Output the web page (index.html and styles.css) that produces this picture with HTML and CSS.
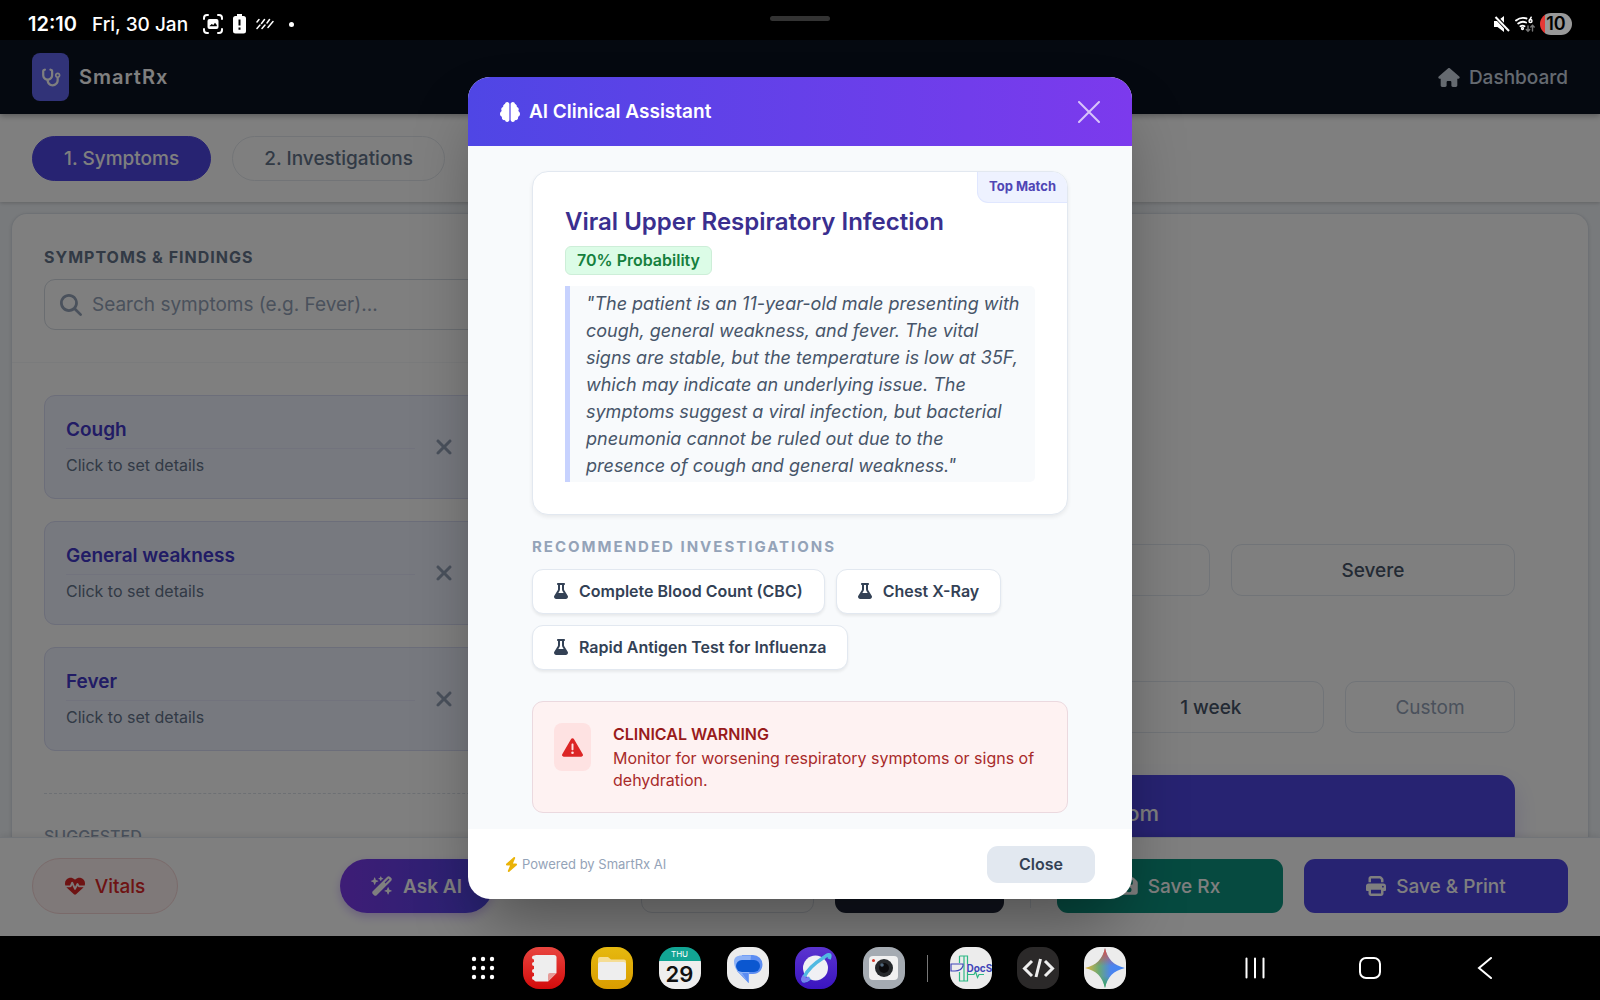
FILE: index.html
```html
<!DOCTYPE html>
<html lang="en">
<head>
<meta charset="utf-8">
<meta name="viewport" content="width=device-width, initial-scale=1">
<title>SmartRx</title>
<link rel="stylesheet" href="styles.css">
</head>
<body>
<svg class="sprite" aria-hidden="true">
  <symbol id="i-flask" viewBox="0 0 448 512"><path d="M288 0H160 128C110.300 0 96 14.300 96 32s14.300 32 32 32V196.800c0 11.800-3.300 23.500-9.500 33.500L10.300 406.200C3.600 417.200 0 429.700 0 442.600C0 480.900 31.100 512 69.400 512H378.600c38.300 0 69.400-31.100 69.400-69.400c0-12.800-3.600-25.400-10.300-36.400L329.500 230.400c-6.200-10.100-9.500-21.700-9.500-33.500V64c17.700 0 32-14.300 32-32s-14.300-32-32-32H288zM192 196.800V64h64V196.800c0 23.700 6.600 46.900 19 67.100L309.500 320h-171L173 263.900c12.400-20.200 19-43.400 19-67.100z"/></symbol>
  <symbol id="i-x" viewBox="0 0 384 512"><path d="M342.600 150.600c12.500-12.500 12.500-32.800 0-45.300s-32.800-12.500-45.300 0L192 210.700 86.600 105.400c-12.500-12.500-32.800-12.500-45.300 0s-12.500 32.800 0 45.300L146.700 256 41.400 361.400c-12.500 12.500-12.500 32.800 0 45.300s32.800 12.500 45.300 0L192 301.300 297.400 406.600c12.500 12.500 32.800 12.500 45.300 0s12.500-32.800 0-45.300L237.300 256 342.600 150.600z"/></symbol>
</svg>

<div class="statusbar">
  <div class="status-left">
    <span>12:10</span>
    <span class="date">Fri, 30 Jan</span>
    <svg class="st-icon" width="20" height="20" viewBox="0 0 20 20" fill="none" stroke="#fff" stroke-width="2" stroke-linecap="round"><path d="M1 5V4a3 3 0 0 1 3-3h1M15 1h1a3 3 0 0 1 3 3v1M19 15v1a3 3 0 0 1-3 3h-1M5 19H4a3 3 0 0 1-3-3v-1"/><rect x="4.500" y="5" width="11" height="10" rx="2" fill="#fff" stroke="none"/><path d="M6.500 12l2.200-2 1.600 1 1.700-2.200 1.800 2.200v1.200H6.500z" fill="#000" stroke="none"/></svg>
    <svg width="13" height="20" viewBox="0 0 13 20"><path d="M4 0h5v2h1.500A2.500 2.500 0 0 1 13 4.500v12.500a2.500 2.500 0 0 1-2.500 2.500h-8A2.500 2.500 0 0 1 0 17V4.500A2.500 2.500 0 0 1 2.500 2H4z" fill="#fff"/><path d="M5.500 5.500h2v6h-2zM5.500 13.500h2v2.200h-2z" fill="#000"/></svg>
    <svg width="18" height="12" viewBox="0 0 18 12" fill="none" stroke="#fff" stroke-width="1.500" stroke-linecap="round"><path d="M1 4L3 1.500M1 10.500L4 7M5.500 5.500L8.500 1.500M6 10.500L9 7M11 5L13.500 1.500M12 9.500L17 3.500"/></svg>
    <span class="dot"></span>
  </div>
  <span class="handle"></span>
  <div class="status-right">
    <svg width="16" height="16" viewBox="0 0 16 16"><path d="M0 5h3.500L10 0v16L3.500 11H0z" fill="#fff"/><path d="M1 0l14 15" stroke="#000" stroke-width="4"/><path d="M1.500 1l13.500 14" stroke="#fff" stroke-width="2"/></svg>
    <svg width="20" height="17" viewBox="0 0 20 17" fill="none" stroke="#fff" stroke-width="1.900" stroke-linecap="round"><path d="M1 4.500Q6 .5 11.500 2.500M3.200 7.500Q7 4.700 11 6.500M5.500 10.300q2-1.400 4 0"/><circle cx="7.500" cy="12.500" r=".7"/><path d="M16.200 1.200l-1.500 3" stroke-width="1.500"/><circle cx="15.500" cy="5" r="1.500" stroke-width="1.400"/><g stroke="#777" stroke-width="1.400"><path d="M13 10v5M11.300 13.400L13 15.200l1.700-1.800M17.500 15V9.500M15.800 11l1.700-1.800L19.200 11"/></g></svg>
    <span class="battery">10</span>
  </div>
</div>

<div class="app">
  <header class="topbar">
    <div class="brand">
      <span class="logo"><svg width="20" height="19" viewBox="0 0 576 512" fill="#fff"><path d="M142.400 21.900c5.600 16.800-3.500 34.900-20.200 40.500L96 71.100V192c0 53 43 96 96 96s96-43 96-96V71.100l-26.100-8.700c-16.800-5.600-25.800-23.700-20.200-40.500s23.700-25.800 40.500-20.200l26.100 8.700C334.400 19.100 352 43.500 352 71.100V192c0 77.200-54.600 141.600-127.300 156.700C231 404.600 278.400 448 336 448c61.900 0 112-50.100 112-112V265.300c-28.300-12.300-48-40.500-48-73.300c0-44.200 35.800-80 80-80s80 35.800 80 80c0 32.800-19.700 61-48 73.300V336c0 97.200-78.800 176-176 176c-92.900 0-168.900-71.900-175.500-163.100C87.200 334.200 32 269.600 32 192V71.100c0-27.500 17.600-52 43.800-60.700l26.100-8.700c16.800-5.600 34.900 3.500 40.500 20.200zM480 224a32 32 0 1 0 0-64 32 32 0 1 0 0 64z"/></svg></span>
      <span class="brand-name">SmartRx</span>
    </div>
    <a class="dash" href="#"><svg width="22" height="19" viewBox="0 0 576 512" fill="currentColor"><path d="M575.800 255.500c0 18-15 32.100-32 32.100h-32l.7 160.200c0 2.700-.2 5.400-.5 8.100V472c0 22.100-17.900 40-40 40H456H416 392c-22.100 0-40-17.900-40-40V448 384c0-17.700-14.300-32-32-32H256c-17.700 0-32 14.300-32 32v64 24c0 22.100-17.900 40-40 40H160 104c-22.100 0-40-17.900-40-40V360V287.600H32c-18 0-32-14-32-32.100c0-9 3-17 10-24L266.400 8c7-7 15-8 22-8s15 2 21 7L564.800 231.500c8 7 12 15 11 24z"/></svg>Dashboard</a>
  </header>

  <nav class="tabs">
    <button class="tab active">1. Symptoms</button>
    <button class="tab">2. Investigations</button>
  </nav>

  <main class="workspace">
    <div class="panel">
      <section class="list-pane">
        <div class="search-block">
          <label class="label" for="search">SYMPTOMS &amp; FINDINGS</label>
          <div class="search">
            <svg width="22" height="22" viewBox="0 0 512 512" fill="#94a3b8"><path d="M416 208c0 45.900-14.900 88.300-40 122.700L502.600 457.400c12.500 12.500 12.500 32.800 0 45.300s-32.800 12.500-45.300 0L330.700 376c-34.400 25.200-76.800 40-122.700 40C93.100 416 0 322.900 0 208S93.100 0 208 0S416 93.100 416 208zM208 352a144 144 0 1 0 0-288 144 144 0 1 0 0 288z"/></svg>
            <input id="search" type="text" placeholder="Search symptoms (e.g. Fever)...">
          </div>
        </div>
        <div class="items">
          <article class="item"><div class="item-text"><h3>Cough</h3><p>Click to set details</p></div><button class="remove" aria-label="Remove Cough"><svg width="18" height="24"><use href="#i-x"/></svg></button></article>
          <article class="item"><div class="item-text"><h3>General weakness</h3><p>Click to set details</p></div><button class="remove" aria-label="Remove General weakness"><svg width="18" height="24"><use href="#i-x"/></svg></button></article>
          <article class="item"><div class="item-text"><h3>Fever</h3><p>Click to set details</p></div><button class="remove" aria-label="Remove Fever"><svg width="18" height="24"><use href="#i-x"/></svg></button></article>
          <div class="suggested">SUGGESTED</div>
        </div>
      </section>
      <section class="detail-pane">
        <div class="options three">
          <button class="option">Mild</button><button class="option">Moderate</button><button class="option">Severe</button>
        </div>
        <div class="options duration">
          <div class="presets"><button class="option">1 day</button><button class="option">3 days</button><button class="option">1 week</button></div>
          <input class="option custom" type="text" placeholder="Custom" aria-label="Custom duration">
        </div>
        <button class="update">Update Symptom</button>
      </section>
    </div>
  </main>

  <footer class="actions">
    <button class="btn vitals"><svg width="20" height="20" viewBox="0 0 512 512" fill="currentColor"><path d="M228.300 469.100L47.600 300.400c-4.200-3.900-8.200-8.100-11.900-12.400h87c22.600 0 43-13.600 51.700-34.500l10.500-25.200 49.300 109.500c3.800 8.500 12.100 14 21.400 14.100s17.800-5 22-13.300L320 253.700l1.700 3.400c9.500 19 28.900 31 50.100 31H476.300c-3.700 4.300-7.700 8.500-11.900 12.400L283.700 469.100c-7.500 7-17.400 10.900-27.700 10.900s-20.200-3.900-27.700-10.900zM503.700 240h-132c-3 0-5.800-1.700-7.200-4.400l-23.200-46.300c-4.100-8.100-12.400-13.300-21.500-13.300s-17.400 5.100-21.500 13.300l-41.400 82.800L205.900 158.200c-3.900-8.700-12.700-14.300-22.200-14.100s-18.100 5.900-21.800 14.800l-31.800 76.300c-1.200 3-4.200 4.900-7.400 4.900H16c-2.600 0-5 .4-7.300 1.100C3 225.200 0 208.200 0 190.900v-5.800c0-69.900 50.500-129.500 119.400-141C165 36.500 211.400 51.400 244 84l12 12 12-12c32.600-32.600 79-47.500 124.600-39.900C461.500 55.600 512 115.200 512 185.100v5.800c0 16.900-2.800 33.500-8.300 49.100z"/></svg>Vitals</button>
    <button class="btn ask"><svg width="22" height="20" viewBox="0 0 576 512" fill="currentColor"><path d="M234.700 42.700L197 56.800c-3 1.100-5 4-5 7.200s2 6.100 5 7.200l37.700 14.100L248.800 123c1.100 3 4 5 7.200 5s6.100-2 7.200-5l14.100-37.700L315 71.200c3-1.100 5-4 5-7.200s-2-6.100-5-7.200L277.300 42.700 263.200 5c-1.100-3-4-5-7.200-5s-6.100 2-7.200 5L234.700 42.700zM46.100 395.400c-18.700 18.700-18.700 49.100 0 67.900l34.600 34.600c18.700 18.700 49.100 18.700 67.900 0L529.900 116.500c18.700-18.700 18.700-49.100 0-67.900L495.300 14.100c-18.700-18.700-49.100-18.700-67.900 0L46.100 395.400zM484.600 82.600l-105 105-23.300-23.300 105-105 23.300 23.300zM7.500 117.200C3 118.900 0 123.200 0 128s3 9.100 7.500 10.800L64 160l21.200 56.500c1.700 4.500 6 7.500 10.800 7.500s9.100-3 10.800-7.500L128 160l56.500-21.200c4.500-1.700 7.500-6 7.500-10.800s-3-9.100-7.500-10.800L128 96 106.800 39.500C105.100 35 100.800 32 96 32s-9.100 3-10.800 7.500L64 96 7.500 117.200zm352 256c-4.500 1.700-7.500 6-7.500 10.800s3 9.100 7.500 10.800L416 416l21.200 56.500c1.700 4.500 6 7.500 10.800 7.500s9.100-3 10.800-7.500L480 416l56.500-21.200c4.500-1.700 7.500-6 7.500-10.800s-3-9.100-7.500-10.800L480 352l-21.200-56.500c-1.700-4.500-6-7.500-10.800-7.500s-9.100 3-10.800 7.500L416 352l-56.500 21.200z"/></svg>Ask AI</button>
    <div class="main-actions">
      <button class="btn outline">Templates</button>
      <button class="btn dark">Preview</button>
      <span class="divider"></span>
      <button class="btn save"><svg width="18" height="20" viewBox="0 0 448 512" fill="currentColor"><path d="M64 32C28.700 32 0 60.700 0 96V416c0 35.300 28.700 64 64 64H384c35.300 0 64-28.700 64-64V173.300c0-17-6.700-33.300-18.700-45.300L352 50.700C340 38.700 323.700 32 306.700 32H64zm0 96c0-17.700 14.300-32 32-32H288c17.700 0 32 14.300 32 32v64c0 17.700-14.300 32-32 32H96c-17.700 0-32-14.300-32-32V128zM224 288a64 64 0 1 1 0 128 64 64 0 1 1 0-128z"/></svg>Save Rx</button>
      <button class="btn print"><svg width="20" height="20" viewBox="0 0 512 512" fill="currentColor"><path d="M128 0C92.700 0 64 28.700 64 64v96h64V64H354.700L384 93.300V160h64V93.300c0-17-6.700-33.300-18.700-45.300L400 18.700C388 6.700 371.700 0 354.700 0H128zM384 352v32 64H128V384 368 352H384zm64 32h32c17.700 0 32-14.300 32-32V256c0-35.300-28.700-64-64-64H64c-35.300 0-64 28.700-64 64v96c0 17.700 14.300 32 32 32H64v64c0 35.300 28.700 64 64 64H384c35.300 0 64-28.700 64-64V384zM432 248a24 24 0 1 1 0 48 24 24 0 1 1 0-48z"/></svg>Save &amp; Print</button>
    </div>
  </footer>

  <div class="overlay">
    <div class="modal" role="dialog" aria-labelledby="modal-title">
      <header class="modal-head">
        <h2 id="modal-title"><svg width="20" height="20" viewBox="0 0 512 512" fill="#fff"><path d="M184 0c30.900 0 56 25.100 56 56V456c0 30.900-25.100 56-56 56c-28.900 0-52.700-21.900-55.700-50.100c-5.200 1.400-10.700 2.100-16.300 2.100c-35.300 0-64-28.700-64-64c0-7.400 1.300-14.600 3.600-21.200C21.400 367.400 0 338.200 0 304c0-31.900 18.700-59.500 45.800-72.300C37.100 220.800 32 207 32 192c0-30.700 21.600-56.300 50.400-62.600C80.800 123.900 80 118 80 112c0-29.900 20.600-55.100 48.300-62.100C131.300 21.900 155.100 0 184 0zM328 0c28.900 0 52.600 21.900 55.700 49.900c27.800 7 48.300 32.100 48.300 62.100c0 6-.8 11.900-2.400 17.400c28.800 6.200 50.400 31.900 50.400 62.600c0 15-5.100 28.800-13.800 39.700C493.300 244.500 512 272.100 512 304c0 34.200-21.400 63.400-51.600 74.800c2.300 6.600 3.600 13.800 3.600 21.200c0 35.300-28.700 64-64 64c-5.600 0-11.100-.7-16.300-2.100c-3 28.200-26.800 50.100-55.700 50.100c-30.900 0-56-25.100-56-56V56c0-30.900 25.100-56 56-56z"/></svg>AI Clinical Assistant</h2>
        <button class="modal-x" aria-label="Close dialog"><svg width="22" height="22" viewBox="0 0 22 22" fill="none" stroke="currentColor" stroke-width="2" stroke-linecap="round"><path d="M1 1l20 20M21 1L1 21"/></svg></button>
      </header>
      <div class="modal-body">
        <section class="diagnosis">
          <span class="top-match">Top Match</span>
          <h3>Viral Upper Respiratory Infection</h3>
          <span class="prob">70% Probability</span>
          <blockquote>"The patient is an 11-year-old male presenting with cough, general weakness, and fever. The vital signs are stable, but the temperature is low at 35F, which may indicate an underlying issue. The symptoms suggest a viral infection, but bacterial pneumonia cannot be ruled out due to the presence of cough and general weakness."</blockquote>
        </section>
        <h4 class="rec-title">RECOMMENDED INVESTIGATIONS</h4>
        <div class="chips">
          <button class="chip"><svg width="14" height="16" fill="currentColor"><use href="#i-flask"/></svg>Complete Blood Count (CBC)</button>
          <button class="chip"><svg width="14" height="16" fill="currentColor"><use href="#i-flask"/></svg>Chest X-Ray</button>
          <button class="chip"><svg width="14" height="16" fill="currentColor"><use href="#i-flask"/></svg>Rapid Antigen Test for Influenza</button>
        </div>
        <section class="warning">
          <span class="warn-icon"><svg width="21" height="21" viewBox="0 0 512 512" fill="#dc2626"><path d="M256 32c14.200 0 27.300 7.500 34.500 19.800l216 368c7.300 12.400 7.300 27.700 .2 40.100S486.300 480 472 480H40c-14.300 0-27.600-7.700-34.700-20.100s-7-27.800 .2-40.100l216-368C228.700 39.500 241.800 32 256 32zm0 128c-13.300 0-24 10.700-24 24V296c0 13.300 10.700 24 24 24s24-10.700 24-24V184c0-13.300-10.700-24-24-24zm32 224a32 32 0 1 0 -64 0 32 32 0 1 0 64 0z"/></svg></span>
          <div><h4>CLINICAL WARNING</h4><p>Monitor for worsening respiratory symptoms or signs of dehydration.</p></div>
        </section>
      </div>
      <footer class="modal-foot">
        <span class="powered"><svg width="13" height="15" viewBox="0 0 448 512" fill="#eab308"><path d="M349.400 44.600c5.900-13.700 1.500-29.700-10.600-38.500s-28.600-8-39.900 1.800l-256 224c-10 8.800-13.600 22.900-8.900 35.300S50.700 288 64 288H175.500L98.600 467.400c-5.900 13.700-1.500 29.700 10.600 38.500s28.600 8 39.900-1.800l256-224c10-8.800 13.600-22.900 8.900-35.300s-16.600-20.700-30-20.700H272.500L349.400 44.600z"/></svg>Powered by SmartRx AI</span>
        <button class="close">Close</button>
      </footer>
    </div>
  </div>
</div>

<div class="taskbar">
  <div class="dock">
    <button class="plain" aria-label="All apps"><svg width="24" height="24" viewBox="0 0 24 24" fill="#fff"><circle cx="3" cy="3" r="2.200"/><circle cx="12" cy="3" r="2.200"/><circle cx="21" cy="3" r="2.200"/><circle cx="3" cy="12" r="2.200"/><circle cx="12" cy="12" r="2.200"/><circle cx="21" cy="12" r="2.200"/><circle cx="3" cy="21" r="2.200"/><circle cx="12" cy="21" r="2.200"/><circle cx="21" cy="21" r="2.200"/></svg></button>
    <div class="apps pinned">
      <button class="app-icon notes" aria-label="Notes"><svg width="42" height="42" viewBox="0 0 42 42"><path d="M13 8h18a2.500 2.500 0 0 1 2.500 2.500V26L25 34.500H13a2 2 0 0 1-2-2V10a2 2 0 0 1 2-2z" fill="#eee"/><path d="M33.500 26H27a2 2 0 0 0-2 2v6.500z" fill="#e79b98"/><g fill="#eee"><circle cx="11" cy="10.500" r="2"/><circle cx="11" cy="17" r="2"/><circle cx="11" cy="24" r="2"/><circle cx="11" cy="31" r="2"/></g></svg></button>
      <button class="app-icon files" aria-label="Files"><svg width="42" height="42" viewBox="0 0 42 42"><path d="M7 12a2 2 0 0 1 2-2h8l3 2.500h13a2 2 0 0 1 2 2V20H7z" fill="#f5dd94"/><rect x="7" y="15" width="28" height="18" rx="2.500" fill="#eee"/></svg></button>
      <button class="app-icon calendar" aria-label="Calendar"><span class="cal-day">THU</span><span class="cal-date">29</span></button>
      <button class="app-icon light" aria-label="Messages"><svg width="42" height="42" viewBox="0 0 42 42"><path d="M15 8h11a9.500 9.500 0 0 1 9.500 9.500c0 5-3.500 9.500-9.500 9.500h-4.500v9L10 24z" fill="#5c8df2"/><path d="M14.500 8.500H24L22 28l-.5 8-6-7.500C10.500 26 7 20 7 14.500c0-4 3-6 7.500-6z" fill="#8cb1f7"/><path d="M15 26h6.500v10z" fill="#5c8df2"/><rect x="9" y="13" width="24" height="12" rx="6" fill="#0b57d0"/></svg></button>
      <button class="app-icon browser" aria-label="Internet"><svg width="42" height="42" viewBox="0 0 42 42" fill="none"><circle cx="20.500" cy="21" r="12.500" fill="#f0f0f4"/><path d="M34 12c3-7-2-4-6-1C20 16 12 24 9 30c-3 6 2 4 6 1" stroke="#51b9e2" stroke-width="3.500"/><path d="M9 29c-3 6 1 5 5 2" stroke="#7b7cf0" stroke-width="3.500"/></svg></button>
      <button class="app-icon camera" aria-label="Camera"><svg width="42" height="42" viewBox="0 0 42 42"><rect x="6" y="9" width="29" height="24" rx="4" fill="#f1f1f1"/><circle cx="10.500" cy="13.500" r="1.500" fill="#d43a2c"/><circle cx="21" cy="21" r="9" fill="#25282b"/><circle cx="21" cy="21" r="5" fill="#0a0a0c"/><circle cx="19" cy="18" r="1.800" fill="#50667a"/></svg></button>
    </div>
    <span class="dock-sep"></span>
    <div class="apps">
      <button class="app-icon light docs" aria-label="DocS"><svg width="42" height="42" viewBox="0 0 42 42" fill="none" stroke-width="1.200"><path d="M9.500 9h8v8M9.500 9v7M17.500 25v9h-8v-9M14 9v25M17 27.500h7l1.500-3 2 6 1.500-3h5" stroke="#2db884"/><path d="M1 17h12v2q-2 5-8 5H1z" stroke="#4146b8"/></svg><span>DocS</span></button>
      <button class="app-icon code" aria-label="Code editor"><svg width="42" height="42" viewBox="0 0 42 42" fill="none" stroke="#eee" stroke-width="3"><path d="M15 14l-7.500 7.500L15 29M28 14l7.500 7.500L28 29M23.500 12l-4.500 18"/></svg></button>
      <button class="app-icon light" aria-label="Gemini"><svg width="42" height="42" viewBox="0 0 42 42"><defs><linearGradient id="gx" x1="0" x2="1"><stop offset="0" stop-color="#e8b43a"/><stop offset=".35" stop-color="#69a976"/><stop offset=".65" stop-color="#4b84ef"/><stop offset="1" stop-color="#4285f4"/></linearGradient><linearGradient id="gy" x1="0" x2="0" y1="0" y2="1"><stop offset="0" stop-color="#e8453c"/><stop offset=".45" stop-color="#e8453c" stop-opacity="0"/><stop offset=".7" stop-color="#34a853" stop-opacity="0"/><stop offset="1" stop-color="#34a853"/></linearGradient></defs><path d="M21 1c2.500 11 8.500 17.500 20 20-11.500 2.500-17.500 9-20 20C18.500 30 12.500 23.500 1 21 12.500 18.500 18.500 12 21 1z" fill="url(#gx)"/><path d="M21 1c2.500 11 8.500 17.500 20 20-11.500 2.500-17.500 9-20 20C18.500 30 12.500 23.500 1 21 12.500 18.500 18.500 12 21 1z" fill="url(#gy)"/></svg></button>
    </div>
  </div>
  <div class="sysnav">
    <button class="plain" aria-label="Recents"><svg width="22" height="22" viewBox="0 0 22 22" stroke="#fff" stroke-width="2" stroke-linecap="round"><path d="M2.500 1.500v19M11 1.500v19M19.500 1.500v19"/></svg></button>
    <button class="plain" aria-label="Home"><svg width="22" height="22" viewBox="0 0 22 22" fill="none" stroke="#fff" stroke-width="2"><rect x="1" y="1" width="20" height="20" rx="6"/></svg></button>
    <button class="plain" aria-label="Back"><svg width="22" height="22" viewBox="0 0 22 22" fill="none" stroke="#fff" stroke-width="2" stroke-linecap="round"><path d="M17 1L5 11l12 10"/></svg></button>
  </div>
</div>
</body>
</html>
```
FILE: styles.css
```css
* { box-sizing: border-box; }

body {
  margin: 0;
  height: 100vh;
  display: flex;
  flex-direction: column;
  overflow: hidden;
  background: #000;
  font-family: Inter, "Liberation Sans", sans-serif;
  color: #334155;
}

button, input { font: inherit; color: inherit; margin: 0; }
button { cursor: pointer; border: 0; padding: 0; background: none; }
h2, h3, h4, p, blockquote { margin: 0; }
svg { display: block; flex: none; }
.sprite { position: absolute; width: 0; height: 0; }

/* Device status bar */
.statusbar {
  flex: none;
  height: 40px;
  padding: 8px 28px 0;
  display: grid;
  grid-template-columns: 1fr auto 1fr;
  color: #fff;
  font-size: 20px;
  font-weight: 600;
}
.status-left, .status-right { display: flex; align-items: center; height: 32px; }
.status-left { gap: 15px; }
.status-left svg + svg { margin-left: -5px; }
.date { font-size: 19px; font-weight: 500; }
.status-right { justify-content: flex-end; gap: 5px; }
.dot { width: 5px; height: 5px; border-radius: 50%; background: #fff; }
.handle { width: 60px; height: 5px; margin-top: 8px; border-radius: 3px; background: #333; }
.battery {
  width: 32px;
  height: 22px;
  border-radius: 11px;
  background: linear-gradient(90deg, #e53935 5px, #999 5px);
  color: #000;
  font-size: 18px;
  line-height: 22px;
  text-align: center;
}

/* Application shell */
.app {
  position: relative;
  flex: 1;
  min-height: 0;
  display: flex;
  flex-direction: column;
  overflow: hidden;
  background: #f1f5f9;
  font-size: 19px;
  font-weight: 500;
}
.topbar {
  flex: none;
  height: 74px;
  padding: 0 32px;
  display: flex;
  align-items: center;
  justify-content: space-between;
  background: #0b1221;
  box-shadow: 0 2px 6px rgba(0, 0, 0, .3);
  z-index: 1;
}
.brand { display: flex; align-items: center; gap: 10px; }
.logo {
  width: 37px;
  height: 48px;
  border-radius: 8px;
  background: #6366f1;
  display: grid;
  place-items: center;
}
.brand-name { color: #fff; font-size: 20px; font-weight: 600; letter-spacing: 1px; }
.dash { display: flex; align-items: center; gap: 9px; color: #cbd5e1; text-decoration: none; }

.tabs {
  flex: none;
  height: 88px;
  padding: 0 32px;
  display: flex;
  align-items: center;
  gap: 21px;
  background: #fff;
  box-shadow: 0 1px 4px rgba(0, 0, 0, .2);
}
.tab {
  height: 45px;
  padding: 0 31px;
  border: 1px solid #e5e9ee;
  border-radius: 23px;
  color: #64748b;
}
.tab.active { background: #4f46e5; border-color: #4f46e5; color: #fff; }

.workspace { flex: 1; min-height: 0; padding: 11px 11px 0; }
.panel {
  height: 100%;
  display: flex;
  border: 1px solid #dde3ea;
  border-radius: 16px 16px 0 0;
  border-bottom: 0;
  background: #fff;
  box-shadow: 0 1px 4px rgba(0, 0, 0, .1);
  overflow: hidden;
}
.list-pane { flex: 0 0 34%; border-right: 1px solid #e5e9ee; }
.search-block { padding: 33px 32px 32px; border-bottom: 1px solid #f4f6f8; }
.label { display: block; font-size: 16px; line-height: 20px; font-weight: 700; letter-spacing: 1px; color: #64748b; }
.search {
  height: 51px;
  margin-top: 12px;
  padding-left: 15px;
  display: flex;
  align-items: center;
  gap: 10px;
  border: 1px solid #d5dbe3;
  border-radius: 11px;
}
.search input { flex: 1; border: 0; outline: 0; background: none; padding: 0; font-weight: 400; }
.search input::placeholder { color: #94a3b8; }
.items { padding: 32px 32px 0; display: flex; flex-direction: column; gap: 22px; }
.item {
  height: 104px;
  padding: 0 61px 0 21px;
  display: flex;
  align-items: center;
  gap: 20px;
  border: 1px solid #d9dcf4;
  border-radius: 11px;
  background: #eef2ff;
}
.item-text { flex: 1; }
.item h3 { padding-bottom: 6px; border-bottom: 1px solid #e4e7fb; font-size: 19px; line-height: 24px; font-weight: 600; color: #4338ca; }
.item p { padding-top: 5px; font-size: 16px; line-height: 22px; font-weight: 400; color: #64748b; }
.remove svg { fill: #94a3b8; }
.suggested {
  margin-top: 20px;
  padding-top: 32px;
  border-top: 1px dashed #dbe0e8;
  font-size: 16px;
  line-height: 20px;
  font-weight: 500;
  color: #94a3b8;
}

.detail-pane { flex: 1; padding: 330px 73px 0; display: flex; flex-direction: column; }
.options { flex: none; display: grid; gap: 21px; }
.three { grid-template-columns: repeat(3, 1fr); }
.duration { grid-template-columns: 1fr 170px; margin-top: 85px; }
.presets { display: grid; grid-template-columns: repeat(3, 1fr); gap: 12px; }
.option {
  width: 100%;
  height: 52px;
  border: 1px solid #e2e8f0;
  border-radius: 11px;
  background: #fff;
  text-align: center;
  color: #475569;
}
.custom { font-weight: 400; }
.custom::placeholder { color: #94a3b8; }
.update {
  flex: none;
  height: 75px;
  margin-top: 42px;
  border-radius: 16px;
  background: #4f46e5;
  color: #fff;
  font-size: 22px;
  box-shadow: 0 10px 24px rgba(79, 70, 229, .2);
}

.actions {
  flex: none;
  height: 99px;
  padding: 0 32px 2px;
  display: flex;
  align-items: center;
  background: #fff;
  border-top: 1px solid #e2e8f0;
  box-shadow: 0 -2px 6px rgba(0, 0, 0, .08);
  z-index: 1;
}
.btn {
  height: 54px;
  display: flex;
  align-items: center;
  justify-content: center;
  gap: 10px;
  border-radius: 11px;
  color: #fff;
}
.vitals { width: 146px; height: 56px; border: 1px solid #f5d5d5; border-radius: 28px; background: #fef2f2; color: #dc2626; }
.ask {
  width: 153px;
  margin-left: 162px;
  border-radius: 27px;
  background: linear-gradient(90deg, #7c3aed, #4f46e5);
  box-shadow: 0 4px 10px rgba(124, 58, 237, .3);
  font-weight: 600;
}
.main-actions { margin-left: auto; display: flex; align-items: center; gap: 21px; }
.outline { width: 173px; border: 1px solid #dbe0e8; color: #475569; }
.dark { width: 169px; background: #1e2538; }
.divider { width: 1px; height: 43px; margin: 0 5px; background: #e2e8f0; }
.save { width: 226px; background: #0d9480; }
.print { width: 264px; background: #4f46e5; }

/* Assistant dialog */
.overlay {
  position: absolute;
  inset: 0;
  z-index: 2;
  display: flex;
  align-items: center;
  justify-content: center;
  background: rgba(0, 0, 0, .5);
}
.modal {
  width: 100%;
  max-width: 664px;
  border-radius: 22px;
  overflow: hidden;
  background: #fff;
  box-shadow: 0 34px 68px -16px rgba(0, 0, 0, .4);
}
.modal-head {
  height: 69px;
  padding: 0 32px;
  display: flex;
  align-items: center;
  justify-content: space-between;
  background: linear-gradient(90deg, #4f46e5, #7c3aed);
}
.modal-head h2 { display: flex; align-items: center; gap: 9px; color: #fff; font-size: 19px; font-weight: 600; }
.modal-x { color: #d8c4fa; }
.modal-body { padding: 25px 64px 16px; background: #f8fafc; }
.diagnosis {
  position: relative;
  padding: 35px 32px 32px;
  border: 1px solid #e2e8f0;
  border-radius: 16px;
  background: #fff;
  box-shadow: 0 2px 4px rgba(0, 0, 0, .07);
}
.top-match {
  position: absolute;
  top: 0;
  right: 0;
  padding: 4px 11px 6px;
  border: 1px solid #e0e7ff;
  border-width: 0 0 1px 1px;
  border-radius: 0 15px 0 11px;
  background: #eef2ff;
  font-size: 13px;
  line-height: 20px;
  font-weight: 700;
  color: #4f46b5;
}
.diagnosis h3 { font-size: 24px; line-height: 30px; font-weight: 600; color: #3a2f8f; }
.prob {
  display: inline-block;
  margin-top: 9px;
  padding: 0 11px;
  border: 1px solid #cdeed8;
  border-radius: 6px;
  background: #dcfce7;
  font-size: 16px;
  line-height: 27px;
  font-weight: 600;
  color: #15803d;
}
blockquote {
  margin-top: 11px;
  padding: 4px 11px 3px 16px;
  border-left: 5px solid #c7d2fe;
  border-radius: 0 5px 5px 0;
  background: #f8fafc;
  font-size: 18px;
  line-height: 27px;
  font-weight: 400;
  font-style: italic;
  color: #475569;
}
.rec-title { margin-top: 22px; font-size: 15px; line-height: 20px; font-weight: 700; letter-spacing: 2px; color: #94a3b8; }
.chips { margin-top: 12px; display: flex; flex-wrap: wrap; gap: 11px; }
.chip {
  height: 45px;
  padding: 0 21px 1px;
  display: flex;
  align-items: center;
  gap: 11px;
  border: 1px solid #e2e8f0;
  border-radius: 11px;
  background: #fff;
  box-shadow: 0 2px 3px rgba(0, 0, 0, .07);
  font-size: 16px;
  font-weight: 600;
  color: #334155;
}
.warning {
  margin-top: 31px;
  padding: 21px;
  display: flex;
  align-items: flex-start;
  gap: 22px;
  border: 1px solid #ebd9df;
  border-radius: 11px;
  background: #fef2f2;
}
.warn-icon { flex: none; width: 37px; height: 48px; border-radius: 8px; background: #fee2e2; display: grid; place-items: center; }
.warning h4 { font-size: 16px; line-height: 22px; font-weight: 600; color: #991b1b; }
.warning p { margin-top: 2px; font-size: 16px; line-height: 22px; font-weight: 400; color: #a82a2a; }
.modal-foot { height: 70px; padding: 0 37px; display: flex; align-items: center; justify-content: space-between; }
.powered { display: flex; align-items: center; gap: 4px; font-size: 13px; font-weight: 400; color: #94a3b8; }
.close { width: 108px; height: 37px; border-radius: 11px; background: #e2e8f0; font-size: 16px; font-weight: 600; }

/* Device taskbar */
.taskbar { flex: none; height: 64px; display: grid; grid-template-columns: 1fr auto 1fr; align-items: center; }
.dock { grid-column: 2; display: flex; align-items: center; gap: 22px; padding-right: 4px; }
.dock > .plain { margin-right: 6px; }
.apps { display: flex; gap: 25px; }
.pinned { gap: 26px; }
.app-icon { position: relative; width: 42px; height: 42px; border-radius: 16px; overflow: hidden; }
.notes { background: linear-gradient(#e8453f, #d30b0b); }
.files { background: linear-gradient(#e6b90f, #d99c00); }
.light { background: #ececec; }
.browser { background: linear-gradient(#5b34cf, #3a14c0); }
.camera { background: #a5abb2; }
.code { background: #2b2929; }
.calendar { display: flex; flex-direction: column; background: linear-gradient(#12a594 14px, #eee 14px); text-align: center; }
.cal-day { font-size: 8px; line-height: 15px; color: #fff; }
.cal-date { font-size: 22px; line-height: 24px; font-weight: 600; color: #111; }
.docs span { position: absolute; left: 17px; top: 13px; font-size: 10px; line-height: 16px; font-weight: 700; color: #4146b8; }
.dock-sep { width: 1px; height: 27px; background: #777; }
.sysnav { display: flex; justify-content: flex-end; gap: 93px; padding-right: 104px; }
```
